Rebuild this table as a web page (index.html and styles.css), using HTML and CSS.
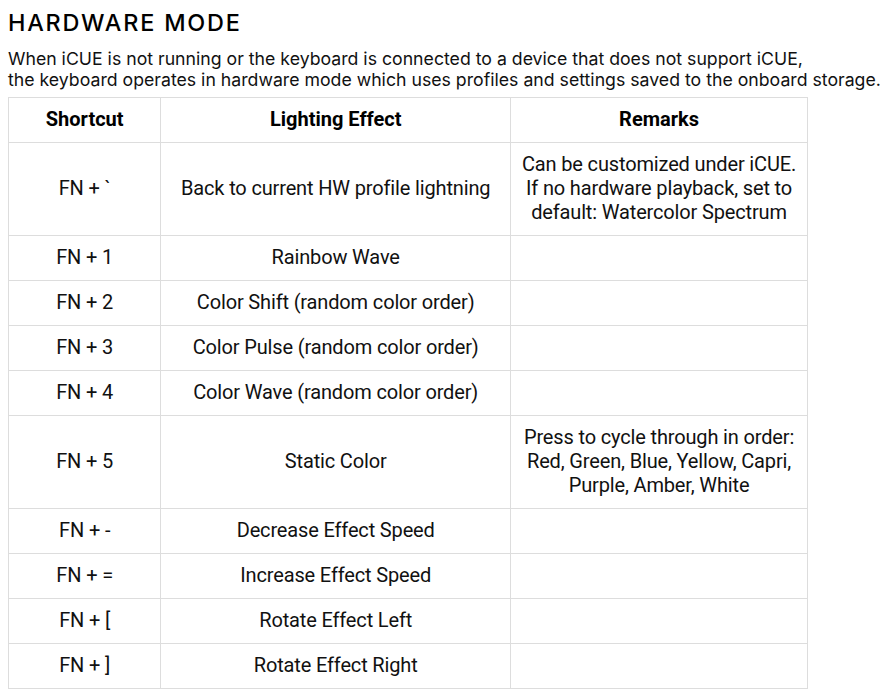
FILE: index.html
```html
<!DOCTYPE html>
<html>
<head>
<meta charset="utf-8">
<link rel="stylesheet" href="styles.css">
</head>
<body>
<h2 class="title">HARDWARE MODE</h2>
<p class="intro">When iCUE is not running or the keyboard is connected to a device that does not support iCUE,<br>the keyboard operates in hardware mode which uses profiles and settings saved to the onboard storage.</p>
<table class="fn-table">
  <colgroup>
    <col class="c1"><col class="c2"><col class="c3">
  </colgroup>
  <thead>
    <tr><th>Shortcut</th><th>Lighting Effect</th><th>Remarks</th></tr>
  </thead>
  <tbody>
    <tr><td>FN + `</td><td>Back to current HW profile lightning</td><td>Can be customized under iCUE.<br>If no hardware playback, set to<br>default: Watercolor Spectrum</td></tr>
    <tr><td>FN + 1</td><td>Rainbow Wave</td><td></td></tr>
    <tr><td>FN + 2</td><td>Color Shift (random color order)</td><td></td></tr>
    <tr><td>FN + 3</td><td>Color Pulse (random color order)</td><td></td></tr>
    <tr><td>FN + 4</td><td>Color Wave (random color order)</td><td></td></tr>
    <tr><td>FN + 5</td><td>Static Color</td><td>Press to cycle through in order:<br>Red, Green, Blue, Yellow, Capri,<br>Purple, Amber, White</td></tr>
    <tr><td>FN + -</td><td>Decrease Effect Speed</td><td></td></tr>
    <tr><td>FN + =</td><td>Increase Effect Speed</td><td></td></tr>
    <tr><td>FN + [</td><td>Rotate Effect Left</td><td></td></tr>
    <tr><td>FN + ]</td><td>Rotate Effect Right</td><td></td></tr>
  </tbody>
</table>
</body>
</html>
```
FILE: styles.css
```css
html, body {
  margin: 0;
  background: #fff;
}
body {
  padding: 8px 8px 0 8px;
  font-family: Inter, "Liberation Sans", sans-serif;
  color: #111;
}
.title {
  margin: 0;
  font-size: 23.4px;
  line-height: 30px;
  font-weight: 500;
  letter-spacing: 1.8px;
  color: #000;
}
.intro {
  margin: 10px 0 7px 0;
  font-size: 17.7px;
  line-height: 21px;
  white-space: nowrap;
}
.fn-table {
  border-collapse: collapse;
  width: 800px;
  font-family: Roboto, "Liberation Sans", sans-serif;
  font-size: 20px;
  line-height: 24px;
}
.c1 { width: 153px; }
.c2 { width: 350px; }
.c3 { width: 297px; }
.fn-table th, .fn-table td {
  border: 1px solid #ddd;
  padding: 9px 8px 11px 8px;
  text-align: center;
  vertical-align: middle;
  white-space: nowrap;
}
.fn-table td {
  letter-spacing: -0.15px;
}
.fn-table th {
  font-weight: 700;
  color: #000;
}
```
